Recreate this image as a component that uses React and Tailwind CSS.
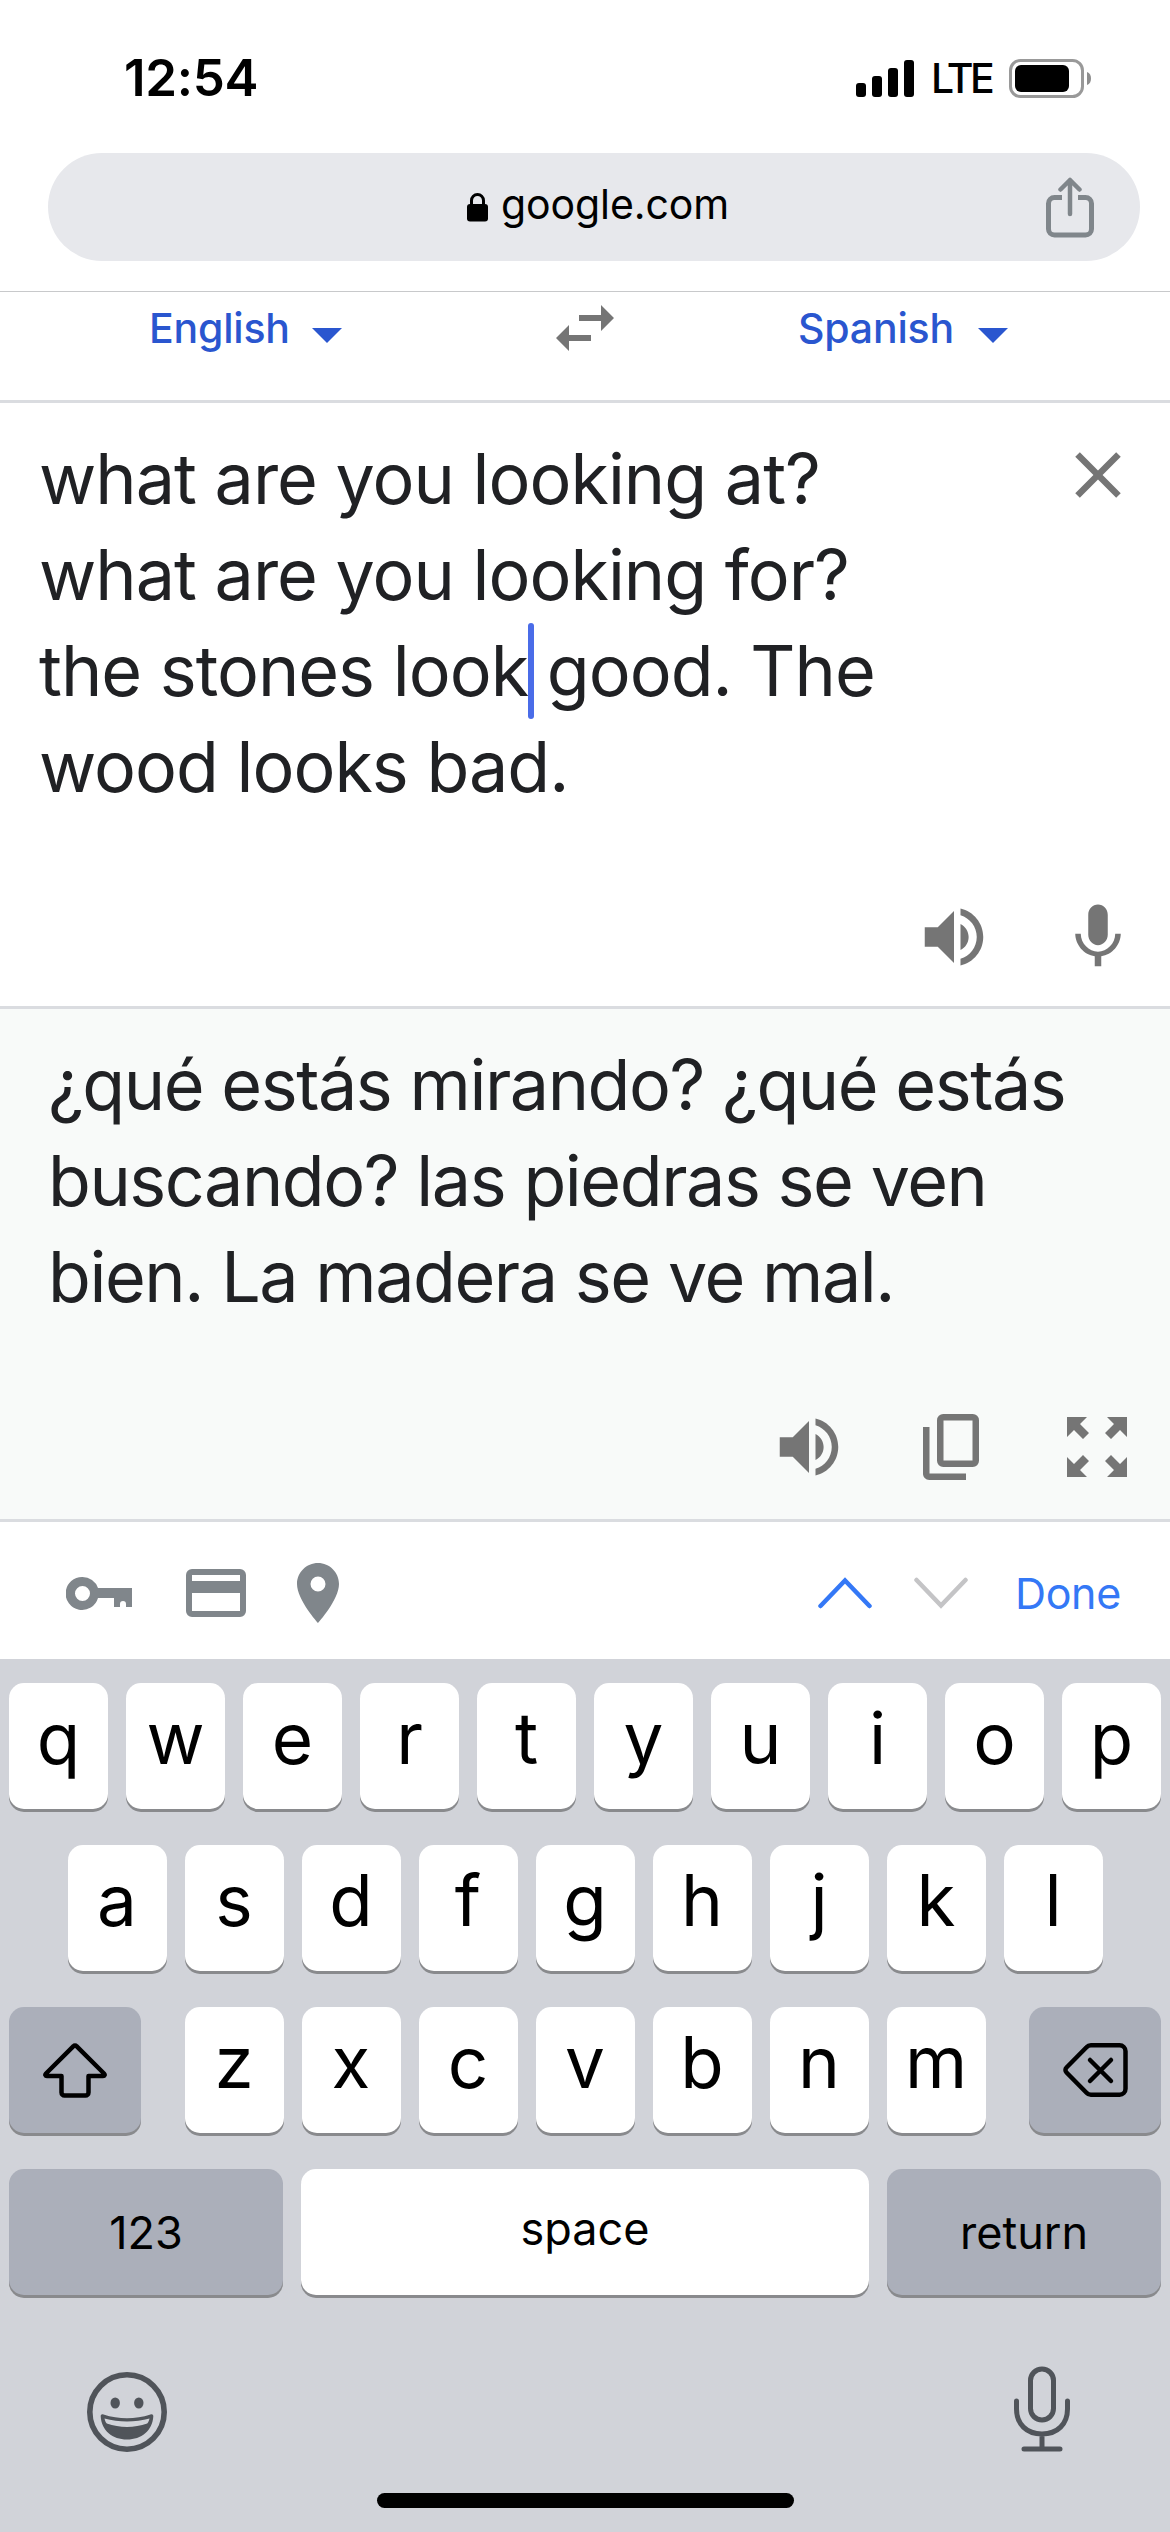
import React from "react";

const topRow = ["q", "w", "e", "r", "t", "y", "u", "i", "o", "p"];
const middleRow = ["a", "s", "d", "f", "g", "h", "j", "k", "l"];
const bottomRow = ["z", "x", "c", "v", "b", "n", "m"];

function StatusBar() {
  return (
    <div className="flex h-[153px] items-start justify-between pt-[48px] pl-[124px] pr-[79px]">
      <span className="text-[51px] leading-[60px] font-semibold tracking-[-0.3px]">12:54</span>
      <div className="flex h-[60px] items-center">
        <svg className="mt-[-1px] h-[38px] w-[58px]" viewBox="0 0 58 38">
          <rect x="0" y="24" width="10" height="14" rx="3" />
          <rect x="16" y="17" width="10" height="21" rx="3" />
          <rect x="32" y="9" width="10" height="29" rx="3" />
          <rect x="48" y="1" width="10" height="37" rx="3" />
        </svg>
        <span className="ml-[17px] w-[78px] text-[41px] leading-[60px] font-medium tracking-[-3.5px]">LTE</span>
        <svg className="h-[39px] w-[82px]" viewBox="0 0 82 39">
          <rect x="1.5" y="1.5" width="72" height="36" rx="10" fill="none" stroke="#999" strokeWidth="3" />
          <rect x="6" y="6" width="54" height="27" rx="6" />
          <path d="M78 13c3 1.200 4 3.500 4 6.500s-1 5.300-4 6.500z" fill="#8e8e8e" />
        </svg>
      </div>
    </div>
  );
}

function AddressBar() {
  return (
    <div className="h-[139px] border-b border-[#c8c9cb]">
      <div className="ml-[48px] mr-[30px] flex h-[108px] items-center rounded-full bg-[#e7e8ec]">
        <svg className="ml-[419px] h-[30px] w-[21px]" viewBox="0 0 21 30">
          <path d="M4.500 14V8.500a6 6 0 0 1 12 0V14" fill="none" stroke="#000" strokeWidth="3" />
          <rect x="0" y="12" width="21" height="17.500" rx="3" />
        </svg>
        <span className="ml-[13px] pb-[4px] text-[41px] tracking-[-0.1px]">google.com</span>
        <svg className="mr-[46px] ml-auto h-[61px] w-[48px]" viewBox="0 0 48 61" fill="none" stroke="#80868b" strokeWidth="5">
          <path d="M16 20.500H8.500a6 6 0 0 0-6 6V52a6 6 0 0 0 6 6h31a6 6 0 0 0 6-6V26.500a6 6 0 0 0-6-6H32" />
          <path d="M24 37V3M14.500 12.500 24 3l9.500 9.500" strokeWidth="4.500" strokeLinecap="round" strokeLinejoin="round" />
        </svg>
      </div>
    </div>
  );
}

function Caret() {
  return (
    <svg className="mt-[15px] h-[15px] w-[30px]" viewBox="0 0 30 15" fill="#2a56cf">
      <path d="M0 0h30L15 15z" />
    </svg>
  );
}

function LanguageBar() {
  return (
    <div className="flex h-[111px] items-start border-b-3 border-[#dadce0] pt-[11px] text-[41px] leading-[50px] font-medium tracking-[-0.2px] text-[#2a56cf]">
      <div className="flex w-[556px] items-center pl-[149px]">
        <span className="w-[163px]">English</span>
        <Caret />
      </div>
      <svg className="mt-[2px] h-[46px] w-[58px]" viewBox="0 0 58 46" fill="#757575">
        <path d="M45 0v10H23v6h22v10l13-13zM13 20v10h22v6H13v10L0 33z" />
      </svg>
      <div className="flex items-center pl-[184px]">
        <span className="w-[180px]">Spanish</span>
        <Caret />
      </div>
    </div>
  );
}

function SpeakerIcon() {
  return (
    <svg className="size-[78px]" viewBox="0 0 24 24" fill="#757575">
      <path d="M3 9v6h4l5 5V4L7 9H3zm13.500 3c0-1.770-1.020-3.290-2.500-4.030v8.050c1.480-.73 2.500-2.250 2.500-4.020zM14 3.230v2.060c2.890.86 5 3.540 5 6.710s-2.110 5.850-5 6.710v2.060c4.010-.91 7-4.490 7-8.770s-2.990-7.860-7-8.770z" />
    </svg>
  );
}

function SourcePanel() {
  return (
    <div className="flex h-[606px] flex-col justify-between border-b-3 border-[#dadce0] pt-[28px] pb-[30px]">
      <div className="flex justify-between pr-[33px] pl-[39px]">
        <div className="text-[70px] leading-[96px] tracking-[-1px] whitespace-nowrap text-[#202124]">
          <p>what are you looking at?</p>
          <p>what are you looking for?</p>
          <p>
            the stones look
            <span className="relative">
              <span className="absolute -top-[5px] left-0 h-[96px] w-[6px] rounded-full bg-[#4a6ce8]" />
            </span>{" "}
            good. The
          </p>
          <p>wood looks bad.</p>
        </div>
        <svg className="mt-[5px] size-[78px]" viewBox="0 0 24 24" fill="#757575">
          <path d="M19 6.410 17.590 5 12 10.590 6.410 5 5 6.410 10.590 12 5 17.590 6.410 19 12 13.410 17.590 19 19 17.590 13.410 12z" />
        </svg>
      </div>
      <div className="flex justify-end gap-[66px] pr-[33px]">
        <SpeakerIcon />
        <svg className="size-[78px]" viewBox="0 0 24 24" fill="#757575">
          <path d="M12 14.500c1.660 0 3-1.500 3-3.200V5.200C15 3.400 13.660 2 12 2S9 3.400 9 5.200v6.100c0 1.700 1.340 3.200 3 3.200zm5.300-3.500c0 3-2.540 5.500-5.300 5.500S6.700 14 6.700 11H5c0 3.410 2.720 6.500 6 6.900V21h2v-3.100c3.280-.4 6-3.490 6-6.900h-1.700z" />
        </svg>
      </div>
    </div>
  );
}

function TranslationPanel() {
  return (
    <div className="flex h-[513px] flex-col justify-between border-b-3 border-[#dadce0] bg-[#f8faf9] pt-[28px] pb-[33px]">
      <div className="pl-[48px] text-[70px] leading-[96px] tracking-[-1.45px] whitespace-nowrap text-[#202124]">
        <p>¿qué estás mirando? ¿qué estás</p>
        <p>buscando? las piedras se ven</p>
        <p>bien. La madera se ve mal.</p>
      </div>
      <div className="flex items-center justify-end pr-[43px]">
        <SpeakerIcon />
        <svg className="ml-[75px] h-[66px] w-[56px]" viewBox="0 0 56 66" fill="none" stroke="#757575" strokeWidth="6.500">
          <rect x="17.250" y="3.250" width="35.500" height="46.500" rx="3" />
          <path d="M3.250 13v46.500a3 3 0 0 0 3 3.250H43" />
        </svg>
        <svg className="ml-[88px] size-[60px]" viewBox="0 0 60 60" fill="#757575">
          <path d="M0 0h20l-7 7 9 9-6 6-9-9-7 7zM60 0v20l-7-7-9 9-6-6 9-9-7-7zM0 60V40l7 7 9-9 6 6-9 9 7 7zM60 60H40l7-7-9-9 6-6 9 9 7-7z" />
        </svg>
      </div>
    </div>
  );
}

function AccessoryBar() {
  return (
    <div className="flex h-[137px] items-center pt-[5px] pr-[49px] pl-[66px]">
      <svg className="h-[35px] w-[66px]" viewBox="0 0 66 35" fill="#80868b">
        <path fillRule="evenodd" d="M16.500 1a16.500 16.500 0 0 1 15.500 11H66v19h-6v-3a3 3 0 0 0-6 0v3h-6V22H32A16.500 16.500 0 1 1 16.500 1zm0 9a7.500 7.500 0 1 0 0 15 7.500 7.500 0 0 0 0-15z" />
      </svg>
      <svg className="ml-[54px] h-[48px] w-[60px]" viewBox="0 0 60 48" fill="#80868b">
        <path fillRule="evenodd" d="M6 0h48a6 6 0 0 1 6 6v36a6 6 0 0 1-6 6H6a6 6 0 0 1-6-6V6a6 6 0 0 1 6-6zm0 6v6h48V6zm0 18v18h48V24z" />
      </svg>
      <svg className="ml-[51px] h-[60px] w-[42px]" viewBox="5 2 14 20" fill="#80868b">
        <path d="M12 2C8.130 2 5 5.130 5 9c0 5.250 7 13 7 13s7-7.750 7-13c0-3.870-3.130-7-7-7zm0 9.500a2.500 2.500 0 0 1 0-5 2.500 2.500 0 0 1 0 5z" />
      </svg>
      <svg className="ml-auto h-[32px] w-[54px]" viewBox="0 0 54 32" fill="none" stroke="#3478f6" strokeWidth="4.500" strokeLinecap="round">
        <path d="M2.500 29 27 3.500 51.500 29" />
      </svg>
      <svg className="ml-[42px] h-[32px] w-[54px]" viewBox="0 0 54 32" fill="none" stroke="#c4c4c6" strokeWidth="4.500" strokeLinecap="round">
        <path d="M2.500 3 27 28.500 51.500 3" />
      </svg>
      <span className="ml-[47px] text-[43px] tracking-[-0.3px] text-[#3478f6]">Done</span>
    </div>
  );
}

function Key({ children }) {
  return (
    <div className="flex h-[126px] w-[99px] justify-center rounded-[15px] bg-white text-[71px] leading-[110px] shadow-[0_3px_0_#898a8d]">
      {children}
    </div>
  );
}

function Keyboard() {
  return (
    <div className="flex flex-1 flex-col bg-[#d1d3d9] px-[9px] pt-[24px]">
      <div className="flex flex-col gap-[36px]">
        <div className="flex justify-center gap-[18px]">
          {topRow.map((letter) => (
            <Key key={letter}>{letter}</Key>
          ))}
        </div>
        <div className="flex justify-center gap-[18px]">
          {middleRow.map((letter) => (
            <Key key={letter}>{letter}</Key>
          ))}
        </div>
        <div className="flex justify-between">
          <div className="flex h-[126px] w-[132px] items-center justify-center rounded-[15px] bg-[#abafba] shadow-[0_3px_0_#898a8d]">
            <svg className="h-[55px] w-[64px]" viewBox="0 0 64 55" fill="none" stroke="#000" strokeWidth="4.500" strokeLinejoin="round">
              <path d="M30.500 3.200 3 30.500c-1.200 1.300-.7 2.500 1 2.500h14.500v16.500a3 3 0 0 0 3 3h21a3 3 0 0 0 3-3V33H60c1.700 0 2.200-1.200 1-2.500L33.500 3.200a2 2 0 0 0-3 0z" />
            </svg>
          </div>
          <div className="flex gap-[18px]">
            {bottomRow.map((letter) => (
              <Key key={letter}>{letter}</Key>
            ))}
          </div>
          <div className="flex h-[126px] w-[132px] items-center justify-center rounded-[15px] bg-[#abafba] shadow-[0_3px_0_#898a8d]">
            <svg className="h-[54px] w-[65px]" viewBox="0 0 65 54" fill="none" stroke="#000" strokeWidth="4.500" strokeLinecap="round" strokeLinejoin="round">
              <path d="M28 2.250h28.500a6 6 0 0 1 6 6v37.500a6 6 0 0 1-6 6H28a6 6 0 0 1-4.500-2L3.500 29.500a3.500 3.500 0 0 1 0-5l20-20.250a6 6 0 0 1 4.500-2z" />
              <path d="m27 17 21 21M48 17 27 38" />
            </svg>
          </div>
        </div>
        <div className="flex gap-[18px] text-[45px]">
          <div className="flex h-[126px] w-[274px] justify-center rounded-[15px] bg-[#abafba] leading-[127px] shadow-[0_3px_0_#898a8d]">123</div>
          <div className="flex h-[126px] flex-1 justify-center rounded-[15px] bg-white leading-[119px] shadow-[0_3px_0_#898a8d]">space</div>
          <div className="flex h-[126px] w-[274px] justify-center rounded-[15px] bg-[#abafba] leading-[127px] shadow-[0_3px_0_#898a8d]">return</div>
        </div>
      </div>
      <div className="mt-[71px] flex items-start justify-between pr-[91px] pl-[78px]">
        <svg className="mt-[6px] size-[80px]" viewBox="0 0 80 80" fill="#50545a">
          <circle cx="40" cy="40" r="37.200" fill="none" stroke="#50545a" strokeWidth="5.600" />
          <ellipse cx="28.200" cy="31" rx="4.700" ry="5.500" />
          <ellipse cx="51.800" cy="31" rx="4.700" ry="5.500" />
          <path
            fillRule="evenodd"
            d="M16.500 42.500c15.500 5 31.500 5 47 0 1.800-.5 2.900.3 2.800 2C65.500 58.500 54.500 67.500 40 67.500S14.500 58.500 13.700 44.500c-.1-1.700 1-2.500 2.800-2zM17.500 46.500c.5 2 1 3.700 2.300 5 13 4.500 27.400 4.500 40.400 0 1.300-1.300 1.800-3 2.300-5-14.500 4-30.500 4-45 0z"
          />
        </svg>
        <svg className="h-[86px] w-[56px]" viewBox="0 0 56 86" fill="none" stroke="#50545a" strokeWidth="5" strokeLinecap="round">
          <rect x="16.500" y="3" width="23" height="51" rx="11.500" />
          <path d="M2.500 35v8c0 15 10 25 25.500 25s25.500-10 25.500-25v-8M28 68v15M10 83h36" />
        </svg>
      </div>
      <div className="mx-auto mt-auto mb-[24px] h-[15px] w-[417px] rounded-full bg-black" />
    </div>
  );
}

export default function App() {
  return (
    <div className="flex h-[2532px] w-[1170px] flex-col overflow-hidden bg-white font-[Inter,sans-serif] text-black">
      <StatusBar />
      <AddressBar />
      <LanguageBar />
      <SourcePanel />
      <TranslationPanel />
      <AccessoryBar />
      <Keyboard />
    </div>
  );
}
